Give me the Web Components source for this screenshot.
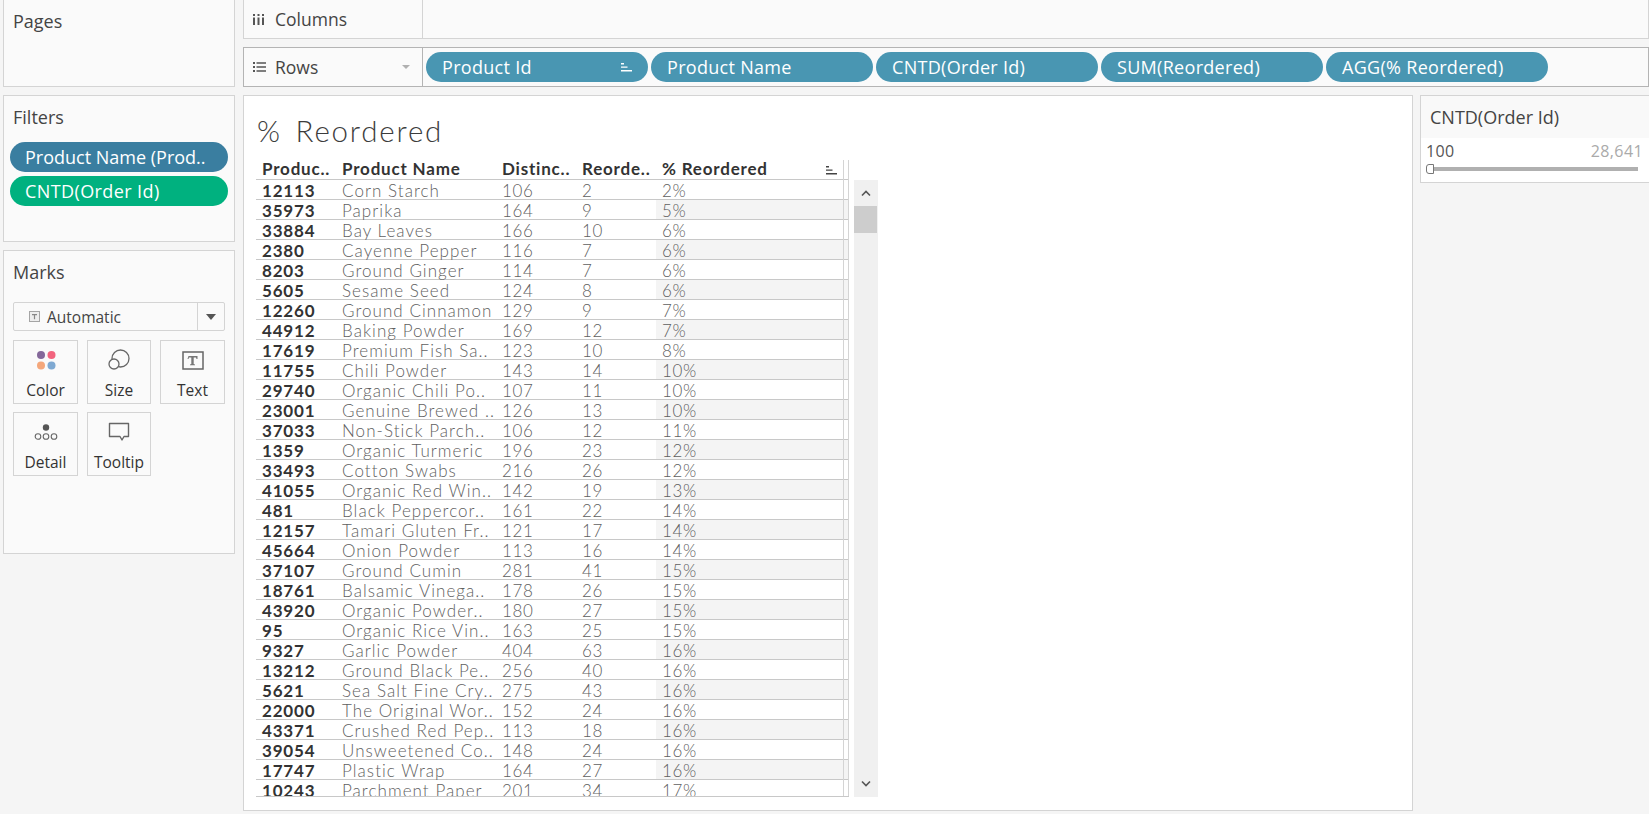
<!DOCTYPE html>
<html lang="en">
<head>
<meta charset="utf-8">
<title>% Reordered</title>
<style>
  html, body { margin: 0; height: 100%; overflow: hidden; background: #f5f5f5; }
  body { font-family: "Open Sans", Lato, sans-serif; color: #333; }
</style>
</head>
<body>
<workbook-view></workbook-view>

<script>
const SORT_ICON = `<svg width="11" height="10" viewBox="0 0 11 10" aria-hidden="true">
  <path d="M0 1h3v1.4H0zM0 4.4h6.5v1.4H0zM0 8h11v1.4H0z" fill="currentColor"></path></svg>`;

class SidePane extends HTMLElement {
    constructor() {
        super();
        this.attachShadow({ mode: 'open' });
        this.shadowRoot.innerHTML = `
        <style>
            :host {
                display: block;
                box-sizing: border-box;
                background: #fafafa;
                border: 1px solid #d4d4d4;
                padding: 0 6px;
            }
            :host([no-top]) { border-top: none; }
            .title { font-size: 18px; color: #444; height: 50px; padding: 11px 0 0 3px; box-sizing: border-box; line-height: 20px; }
        </style>
        <div class="title"></div>
        <slot></slot>`;
    }
    connectedCallback() {
        this.shadowRoot.querySelector('.title').textContent = this.getAttribute('title-text') || '';
    }
}

class FieldPill extends HTMLElement {
    constructor() {
        super();
        this.attachShadow({ mode: 'open' });
        this.shadowRoot.innerHTML = `
        <style>
            :host {
                display: flex;
                align-items: center;
                justify-content: space-between;
                box-sizing: border-box;
                height: 30px;
                border-radius: 15px;
                background: var(--pill-bg, #4996b2);
                color: #fff;
                padding: 0 16px;
                font-size: 18px;
                letter-spacing: .3px;
                white-space: nowrap;
            }
        </style>
        <span><slot></slot></span><slot name="icon"></slot>`;
    }
}

class ShelfBar extends HTMLElement {
    constructor() {
        super();
        this.attachShadow({ mode: 'open' });
        this.shadowRoot.innerHTML = `
        <style>
            :host {
                display: flex;
                box-sizing: border-box;
                background: #fafafa;
                border: 1px solid #d4d4d4;
                font-size: 17.5px;
                color: #444;
            }
            :host([no-top]) { border-top: none; }
            :host([active]) { border-color: #b4b4b4; }
            .caption {
                flex: none;
                box-sizing: border-box;
                width: 179px;
                display: flex;
                align-items: center;
                gap: 9px;
                padding: 0 12px 0 9px;
                border-right: 1px solid #d4d4d4;
            }
            :host([active]) .caption { border-right-color: #b4b4b4; }
            .arrow { margin-left: auto; width: 0; height: 0; border: 4px solid transparent; border-top: 4px solid #b0b0b0; border-bottom: 0; }
            .icon { display: flex; width: 13px; color: #555; }
            .fields { flex: 1; display: flex; align-items: center; gap: 3px; padding: 0 3px; }
            ::slotted(field-pill) { width: 222px; }
        </style>
        <div class="caption">
            <span class="icon"><slot name="icon"></slot></span>
            <span class="label"></span>
            <span class="arrow" hidden></span>
        </div>
        <div class="fields"><slot></slot></div>`;
    }
    connectedCallback() {
        this.shadowRoot.querySelector('.label').textContent = this.getAttribute('label') || '';
        this.shadowRoot.querySelector('.arrow').hidden = !this.hasAttribute('active');
    }
}

class MarkButton extends HTMLElement {
    constructor() {
        super();
        this.attachShadow({ mode: 'open' });
        this.shadowRoot.innerHTML = `
        <style>
            :host {
                display: flex;
                flex-direction: column;
                align-items: center;
                box-sizing: border-box;
                height: 64px;
                border: 1px solid #d4d4d4;
                color: #333;
                font-size: 15.5px;
            }
            .glyph { height: 29px; display: flex; align-items: flex-end; justify-content: center; }
            .name { line-height: 20px; margin-top: 10px; }
        </style>
        <div class="glyph"><slot name="glyph"></slot></div>
        <div class="name"><slot></slot></div>`;
    }
}

class MarksCard extends HTMLElement {
    constructor() {
        super();
        this.attachShadow({ mode: 'open' });
        this.shadowRoot.innerHTML = `
        <style>
            :host { display: block; margin: 0 3px; }
            .select {
                display: flex;
                height: 29px;
                box-sizing: border-box;
                margin: 1px 0 0;
                border: 1px solid #d4d4d4;
                border-radius: 2px;
                font-size: 15.5px;
                color: #444;
            }
            .current { flex: 1; display: flex; align-items: center; gap: 7px; padding-left: 15px; }
            .drop { width: 26px; border-left: 1px solid #d4d4d4; display: flex; align-items: center; justify-content: center; }
            .drop i { width: 0; height: 0; border: 5px solid transparent; border-top: 6px solid #555; border-bottom: 0; }
            .grid { display: grid; grid-template-columns: 65px 64px 65px; justify-content: space-between; row-gap: 8px; margin-top: 9px; }
        </style>
        <div class="select">
            <div class="current">
                <svg width="11" height="11" viewBox="0 0 11 11" aria-hidden="true"><rect x=".5" y=".5" width="10" height="10" fill="#eee" stroke="#a5a5a5"></rect><path d="M3 3h5v1.2H6.1V8.2H4.9V4.2H3z" fill="#888"></path></svg>
                Automatic
            </div>
            <div class="drop"><i></i></div>
        </div>
        <div class="grid"><slot></slot></div>`;
    }
}

class CrossTable extends HTMLElement {
    constructor() {
        super();
        this.attachShadow({ mode: 'open' });
        this.shadowRoot.innerHTML = `
        <style>
            :host {
                display: block;
                box-sizing: border-box;
                width: 593px;
                height: 639px;
                padding-top: 2px;
                overflow: hidden;
                position: relative;
                font-family: Lato, "Open Sans", sans-serif;
                font-size: 17px;
            }
            .frame { position: absolute; top: 2px; bottom: 0; width: 1px; background: #d4d4d4; z-index: 2; }
            .end { position: absolute; left: 0; right: 0; bottom: 0; height: 1px; background: #c8c8c8; z-index: 2; }
            .row {
                display: grid;
                grid-template-columns: 80px 160px 80px 80px 1fr;
                grid-template-rows: 19px;
                box-sizing: border-box;
                height: 20px;
                line-height: 21px;
                border-bottom: 1px solid #c8c8c8;
            }
            .row > div { padding-left: 6px; white-space: nowrap; color: #5f5f5f; font-weight: 300; letter-spacing: .7px; }
            .row > .name { letter-spacing: 1.05px; }
            .row > .id { color: #333; font-weight: 700; letter-spacing: .8px; }
            .row.head { line-height: 18px; }
            .row.head > div { color: #333; font-weight: 700; position: relative; letter-spacing: .8px; }
            .row:not(.head):nth-child(odd) > .pct { background: #f4f4f4; }
            .sort { position: absolute; right: 12px; top: 5px; color: #444; display: flex; }
        </style>
        <div class="frame" style="left:587px"></div>
        <div class="frame" style="right:0"></div>
        <div class="end"></div>
        <div class="body"></div>`;
    }
    connectedCallback() {
        const head = ['Produc..', 'Product Name', 'Distinc..', 'Reorde..', '% Reordered'];
        const cols = ['id', 'name', 'dist', 'reord', 'pct'];
        const body = this.shadowRoot.querySelector('.body');
        const addRow = (cells, cls) => {
            const row = document.createElement('div');
            row.className = cls;
            cells.forEach((text, i) => {
                const cell = document.createElement('div');
                cell.className = cols[i];
                cell.textContent = text;
                row.appendChild(cell);
            });
            body.appendChild(row);
            return row;
        };
        const headRow = addRow(head, 'row head');
        const sort = document.createElement('span');
        sort.className = 'sort';
        sort.innerHTML = SORT_ICON;
        headRow.lastChild.appendChild(sort);
        TABLE_ROWS.forEach(r => addRow(r, 'row'));
    }
}

const TABLE_ROWS = [
    ['12113', 'Corn Starch', '106', '2', '2%'],
    ['35973', 'Paprika', '164', '9', '5%'],
    ['33884', 'Bay Leaves', '166', '10', '6%'],
    ['2380', 'Cayenne Pepper', '116', '7', '6%'],
    ['8203', 'Ground Ginger', '114', '7', '6%'],
    ['5605', 'Sesame Seed', '124', '8', '6%'],
    ['12260', 'Ground Cinnamon', '129', '9', '7%'],
    ['44912', 'Baking Powder', '169', '12', '7%'],
    ['17619', 'Premium Fish Sa..', '123', '10', '8%'],
    ['11755', 'Chili Powder', '143', '14', '10%'],
    ['29740', 'Organic Chili Po..', '107', '11', '10%'],
    ['23001', 'Genuine Brewed ..', '126', '13', '10%'],
    ['37033', 'Non-Stick Parch..', '106', '12', '11%'],
    ['1359', 'Organic Turmeric', '196', '23', '12%'],
    ['33493', 'Cotton Swabs', '216', '26', '12%'],
    ['41055', 'Organic Red Win..', '142', '19', '13%'],
    ['481', 'Black Peppercor..', '161', '22', '14%'],
    ['12157', 'Tamari Gluten Fr..', '121', '17', '14%'],
    ['45664', 'Onion Powder', '113', '16', '14%'],
    ['37107', 'Ground Cumin', '281', '41', '15%'],
    ['18761', 'Balsamic Vinega..', '178', '26', '15%'],
    ['43920', 'Organic Powder..', '180', '27', '15%'],
    ['95', 'Organic Rice Vin..', '163', '25', '15%'],
    ['9327', 'Garlic Powder', '404', '63', '16%'],
    ['13212', 'Ground Black Pe..', '256', '40', '16%'],
    ['5621', 'Sea Salt Fine Cry..', '275', '43', '16%'],
    ['22000', 'The Original Wor..', '152', '24', '16%'],
    ['43371', 'Crushed Red Pep..', '113', '18', '16%'],
    ['39054', 'Unsweetened Co..', '148', '24', '16%'],
    ['17747', 'Plastic Wrap', '164', '27', '16%'],
    ['10243', 'Parchment Paper', '201', '34', '17%']
];

class ScrollTrack extends HTMLElement {
    constructor() {
        super();
        this.attachShadow({ mode: 'open' });
        this.shadowRoot.innerHTML = `
        <style>
            :host {
                display: block;
                position: relative;
                width: 24px;
                height: 617px;
                margin-top: 22px;
                background: #f0f0f0;
            }
            .thumb { position: absolute; left: 0; top: 26px; width: 23px; height: 27px; background: #cdcdcd; }
            svg { position: absolute; left: 7px; }
        </style>
        <svg style="top:10px" width="10" height="7" viewBox="0 0 10 7"><path d="M1 5.5l4-4 4 4" fill="none" stroke="#555" stroke-width="1.6"></path></svg>
        <div class="thumb"></div>
        <svg style="bottom:10px" width="10" height="7" viewBox="0 0 10 7"><path d="M1 1.5l4 4 4-4" fill="none" stroke="#555" stroke-width="1.6"></path></svg>`;
    }
}

class RangeLegend extends HTMLElement {
    constructor() {
        super();
        this.attachShadow({ mode: 'open' });
        this.shadowRoot.innerHTML = `
        <style>
            :host {
                display: block;
                box-sizing: border-box;
                height: 88px;
                background: #fff;
                border: 1px solid #d4d4d4;
                border-right: none;
            }
            .title { height: 42px; background: #f9f9f9; padding: 0 9px; display: flex; align-items: center; font-size: 18px; color: #444; }
            .values { display: flex; justify-content: space-between; padding: 4px 6px 0 5px; font-size: 16px; letter-spacing: .4px; line-height: 18px; color: #555; }
            .values .max { color: #aaa; }
            .slider { position: relative; height: 14px; margin: 2px 0 0 9px; width: 208px; }
            .line { position: absolute; left: 0; right: 0; top: 5px; height: 4px; background: #b0b0b0; }
            .thumb { position: absolute; left: -4px; top: 2px; width: 8px; height: 10px; box-sizing: border-box; background: #fff; border: 1px solid #777; border-radius: 3px 0 0 3px; }
        </style>
        <div class="title">CNTD(Order Id)</div>
        <div class="values"><span>100</span><span class="max">28,641</span></div>
        <div class="slider"><div class="line"></div><div class="thumb"></div></div>`;
    }
}

class SheetView extends HTMLElement {
    constructor() {
        super();
        this.attachShadow({ mode: 'open' });
        this.shadowRoot.innerHTML = `
        <style>
            :host {
                display: block;
                box-sizing: border-box;
                background: #fff;
                border: 1px solid #d4d4d4;
                padding-left: 12px;
                overflow: hidden;
            }
            h1 {
                margin: 0;
                height: 62px;
                box-sizing: border-box;
                padding: 15px 0 0 1px;
                font-family: Lato, "Open Sans", sans-serif;
                font-size: 29.5px;
                line-height: 40px;
                font-weight: 300;
                color: #3c3c3c;
                letter-spacing: 1.8px;
                word-spacing: 4px;
            }
            .wrap { display: flex; align-items: flex-start; gap: 5px; }
        </style>
        <h1>% Reordered</h1>
        <div class="wrap"><cross-table></cross-table><scroll-track></scroll-track></div>`;
    }
}

class WorkbookView extends HTMLElement {
    constructor() {
        super();
        this.attachShadow({ mode: 'open' });
        this.shadowRoot.innerHTML = `
        <style>
            :host {
                display: grid;
                grid-template-columns: 232px 1fr;
                column-gap: 8px;
                box-sizing: border-box;
                height: 814px;
                padding-left: 3px;
            }
            .side, .work { display: flex; flex-direction: column; gap: 8px; min-width: 0; }
            .pages { height: 87px; }
            .filters { height: 147px; }
            .marks { height: 304px; }
            .pills { display: flex; flex-direction: column; gap: 4px; margin-top: -4px; }
            .pills field-pill { padding-left: 15px; }
            .columns { height: 39px; }
            .rows { height: 40px; }
            .content { display: grid; grid-template-columns: 1170px 1fr; column-gap: 7px; height: 716px; }
            .gl { display: block; }
        </style>
        <div class="side">
            <side-pane class="pages" title-text="Pages" no-top></side-pane>
            <side-pane class="filters" title-text="Filters">
                <div class="pills">
                    <field-pill style="--pill-bg:#3a7ea0;letter-spacing:0">Product Name (Prod..</field-pill>
                    <field-pill style="--pill-bg:#00b17f;letter-spacing:.4px">CNTD(Order Id)</field-pill>
                </div>
            </side-pane>
            <side-pane class="marks" title-text="Marks">
                <marks-card>
                    <mark-button>
                        <svg slot="glyph" class="gl" width="20" height="20" viewBox="0 0 20 20"><circle cx="5" cy="5" r="4" fill="#84689a"></circle><circle cx="15.5" cy="5" r="4" fill="#f2647e"></circle><circle cx="5" cy="15.5" r="4" fill="#f4a77b"></circle><circle cx="15.5" cy="15.5" r="4" fill="#7fa9d2"></circle></svg>
                        Color
                    </mark-button>
                    <mark-button>
                        <svg slot="glyph" class="gl" width="22" height="21" viewBox="0 0 22 21"><circle cx="12.5" cy="9.5" r="8.5" fill="none" stroke="#666" stroke-width="1.3"></circle><circle cx="6" cy="15" r="5" fill="#fafafa" stroke="#666" stroke-width="1.3"></circle></svg>
                        Size
                    </mark-button>
                    <mark-button>
                        <svg slot="glyph" class="gl" width="22" height="19" viewBox="0 0 22 19"><rect x="1" y="1" width="20" height="17" fill="none" stroke="#666" stroke-width="1.5"></rect><path d="M6.5 5h9v3h-1l-.5-1.500h-2.300v6.500l1.300.5v.8H8v-.8l1.300-.5V6.500H7L6.500 8h-1z" fill="#777"></path></svg>
                        Text
                    </mark-button>
                    <mark-button>
                        <svg slot="glyph" class="gl" style="margin-bottom:1px" width="24" height="17" viewBox="0 0 24 17"><circle cx="12" cy="3.5" r="3.2" fill="#555"></circle><g fill="none" stroke="#666" stroke-width="1.1"><circle cx="4" cy="12.5" r="2.8"></circle><circle cx="12" cy="12.5" r="2.8"></circle><circle cx="20" cy="12.5" r="2.8"></circle></g></svg>
                        Detail
                    </mark-button>
                    <mark-button>
                        <svg slot="glyph" class="gl" width="22" height="20" viewBox="0 0 22 20"><path d="M1.500 1.500h19v13H16l-2 3.500-2-3.500H1.500z" fill="none" stroke="#666" stroke-width="1.4" stroke-linejoin="round"></path></svg>
                        Tooltip
                    </mark-button>
                </marks-card>
            </side-pane>
        </div>
        <div class="work">
            <shelf-bar class="columns" label="Columns" no-top>
                <svg slot="icon" width="11" height="11" viewBox="0 0 11 11"><path d="M0 0h2v2H0zM4.500 0h2v2h-2zM9 0h2v2H9zM0 3.500h2V11H0zM4.500 3.500h2V11h-2zM9 3.500h2V11H9z" fill="#555"></path></svg>
            </shelf-bar>
            <shelf-bar class="rows" label="Rows" active>
                <svg slot="icon" width="13" height="10" viewBox="0 0 13 10"><path d="M0 0h2v2H0zM3.500 .3H13v1.400H3.500zM0 4h2v2H0zM3.500 4.300H13v1.400H3.500zM0 8h2v2H0zM3.500 8.300H13v1.400H3.500z" fill="#555"></path></svg>
                <field-pill>Product Id<span slot="icon" style="display:flex">${SORT_ICON}</span></field-pill>
                <field-pill>Product Name</field-pill>
                <field-pill>CNTD(Order Id)</field-pill>
                <field-pill>SUM(Reordered)</field-pill>
                <field-pill>AGG(% Reordered)</field-pill>
            </shelf-bar>
            <div class="content">
                <sheet-view></sheet-view>
                <range-legend></range-legend>
            </div>
        </div>`;
    }
}

customElements.define('side-pane', SidePane);
customElements.define('field-pill', FieldPill);
customElements.define('shelf-bar', ShelfBar);
customElements.define('mark-button', MarkButton);
customElements.define('marks-card', MarksCard);
customElements.define('cross-table', CrossTable);
customElements.define('scroll-track', ScrollTrack);
customElements.define('range-legend', RangeLegend);
customElements.define('sheet-view', SheetView);
customElements.define('workbook-view', WorkbookView);
</script>
</body>
</html>
